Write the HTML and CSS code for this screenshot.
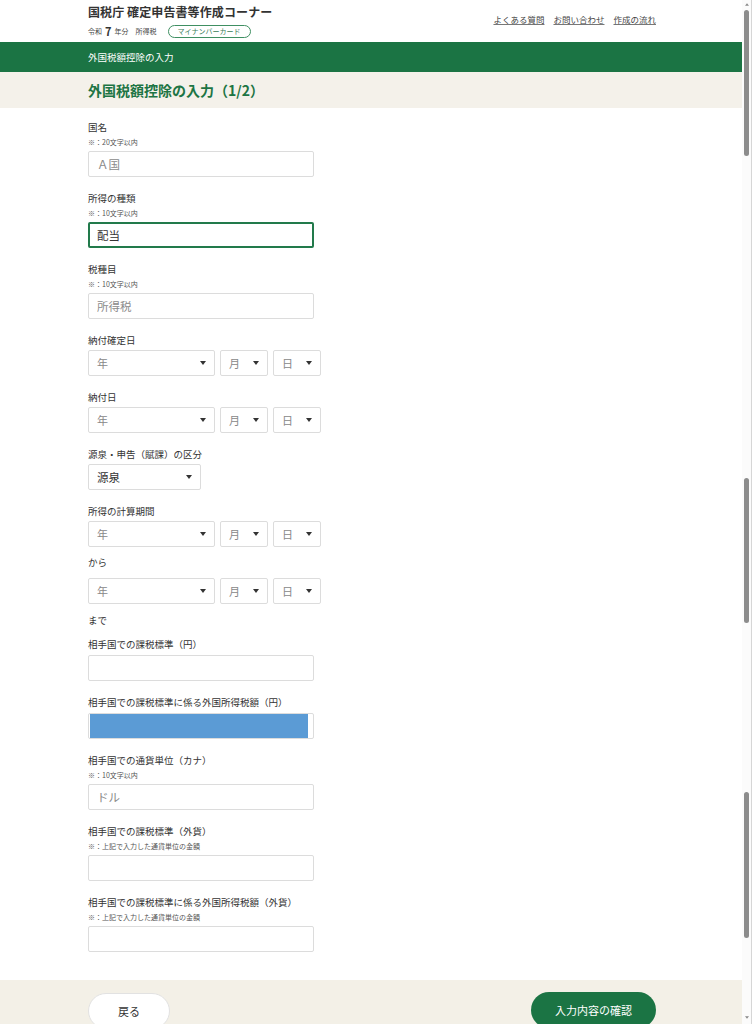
FILE: index.html
```html
<!DOCTYPE html>
<html lang="ja">
<head>
<meta charset="utf-8">
<title>外国税額控除の入力</title>
<link rel="stylesheet" href="styles.css">
</head>
<body>
<div class="app">
  <div class="main">
    <header class="top">
      <div class="brand">
        <div class="title">国税庁 確定申告書等作成コーナー</div>
        <div class="sub">
          <span class="era">令和</span><b class="year">7</b><span class="era">年分</span>
          <span class="era tax">所得税</span>
          <span class="pill">マイナンバーカード</span>
        </div>
      </div>
      <nav class="links">
        <a href="#">よくある質問</a>
        <a href="#">お問い合わせ</a>
        <a href="#">作成の流れ</a>
      </nav>
    </header>

    <div class="crumb">外国税額控除の入力</div>
    <div class="heading"><h1>外国税額控除の入力（1/2）</h1></div>

    <form class="form">
      <div class="field">
        <div class="label">国名</div>
        <div class="note">※：20文字以内</div>
        <input class="text" type="text" placeholder="Ａ国">
      </div>

      <div class="field">
        <div class="label">所得の種類</div>
        <div class="note">※：10文字以内</div>
        <input class="text focus" type="text" value="配当">
      </div>

      <div class="field">
        <div class="label">税種目</div>
        <div class="note">※：10文字以内</div>
        <input class="text" type="text" placeholder="所得税">
      </div>

      <div class="field">
        <div class="label">納付確定日</div>
        <div class="date">
          <div class="select y"><span>年</span><svg viewBox="0 0 6 4" class="arr"><path d="M0 0H6L3 4Z"/></svg></div>
          <div class="select m"><span>月</span><svg viewBox="0 0 6 4" class="arr"><path d="M0 0H6L3 4Z"/></svg></div>
          <div class="select m"><span>日</span><svg viewBox="0 0 6 4" class="arr"><path d="M0 0H6L3 4Z"/></svg></div>
        </div>
      </div>

      <div class="field">
        <div class="label">納付日</div>
        <div class="date">
          <div class="select y"><span>年</span><svg viewBox="0 0 6 4" class="arr"><path d="M0 0H6L3 4Z"/></svg></div>
          <div class="select m"><span>月</span><svg viewBox="0 0 6 4" class="arr"><path d="M0 0H6L3 4Z"/></svg></div>
          <div class="select m"><span>日</span><svg viewBox="0 0 6 4" class="arr"><path d="M0 0H6L3 4Z"/></svg></div>
        </div>
      </div>

      <div class="field">
        <div class="label">源泉・申告（賦課）の区分</div>
        <div class="date">
          <div class="select kind"><span class="val">源泉</span><svg viewBox="0 0 6 4" class="arr"><path d="M0 0H6L3 4Z"/></svg></div>
        </div>
      </div>

      <div class="field period">
        <div class="label">所得の計算期間</div>
        <div class="date">
          <div class="select y"><span>年</span><svg viewBox="0 0 6 4" class="arr"><path d="M0 0H6L3 4Z"/></svg></div>
          <div class="select m"><span>月</span><svg viewBox="0 0 6 4" class="arr"><path d="M0 0H6L3 4Z"/></svg></div>
          <div class="select m"><span>日</span><svg viewBox="0 0 6 4" class="arr"><path d="M0 0H6L3 4Z"/></svg></div>
        </div>
        <div class="between">から</div>
        <div class="date second">
          <div class="select y"><span>年</span><svg viewBox="0 0 6 4" class="arr"><path d="M0 0H6L3 4Z"/></svg></div>
          <div class="select m"><span>月</span><svg viewBox="0 0 6 4" class="arr"><path d="M0 0H6L3 4Z"/></svg></div>
          <div class="select m"><span>日</span><svg viewBox="0 0 6 4" class="arr"><path d="M0 0H6L3 4Z"/></svg></div>
        </div>
        <div class="between until">まで</div>
      </div>

      <div class="field">
        <div class="label">相手国での課税標準（円）</div>
        <input class="text" type="text">
      </div>

      <div class="field">
        <div class="label">相手国での課税標準に係る外国所得税額（円）</div>
        <div class="text hl"><div class="hl-fill"></div></div>
      </div>

      <div class="field">
        <div class="label">相手国での通貨単位（カナ）</div>
        <div class="note">※：10文字以内</div>
        <input class="text" type="text" placeholder="ドル">
      </div>

      <div class="field">
        <div class="label">相手国での課税標準（外貨）</div>
        <div class="note">※：上記で入力した通貨単位の金額</div>
        <input class="text" type="text">
      </div>

      <div class="field">
        <div class="label">相手国での課税標準に係る外国所得税額（外貨）</div>
        <div class="note">※：上記で入力した通貨単位の金額</div>
        <input class="text" type="text">
      </div>
    </form>

    <div class="footer">
      <button class="btn back" type="button">戻る</button>
      <button class="btn next" type="button">入力内容の確認</button>
    </div>
  </div>

  <div class="scrollbar">
    <svg class="sb-arrow" viewBox="0 0 6 4"><path d="M3 0L6 4H0Z"/></svg>
    <div class="thumb t1"></div>
    <div class="thumb t2"></div>
    <div class="thumb t3"></div>
    <div class="sb-space"></div>
    <svg class="sb-arrow" viewBox="0 0 6 4"><path d="M0 0H6L3 4Z"/></svg>
  </div>
</div>
</body>
</html>
```

FILE: styles.css
```css
* { box-sizing: border-box; }

html, body {
  margin: 0;
  padding: 0;
  height: 1024px;
  overflow: hidden;
  background: #ffffff;
  font-family: "Noto Sans CJK JP", "Noto Sans", "Liberation Sans", sans-serif;
  color: #333333;
}

.app {
  display: flex;
  width: 752px;
  height: 1024px;
}

.main {
  width: 742px;
  height: 1024px;
  display: flex;
  flex-direction: column;
  overflow: hidden;
}

/* header */
.top {
  flex: none;
  height: 42px;
  display: flex;
  justify-content: space-between;
  padding: 0 86px 0 88px;
}

.brand {
  display: flex;
  flex-direction: column;
}

.title {
  font-size: 12px;
  font-weight: 700;
  line-height: 16px;
  margin-top: 4px;
  color: #333;
  letter-spacing: 0.1px;
}

.sub {
  display: flex;
  align-items: center;
  height: 16px;
  margin-top: 3px;
}

.era {
  font-size: 7px;
  color: #444;
}

.year {
  font-size: 11px;
  font-weight: 700;
  margin: 0 3px;
  color: #333;
}

.tax {
  margin-left: 7px;
}

.pill {
  margin-left: 11px;
  height: 13px;
  width: 83px;
  border: 1px solid #3f8f62;
  border-radius: 7px;
  font-size: 7px;
  line-height: 11px;
  color: #3a7c57;
  text-align: center;
}

.links {
  display: flex;
  gap: 9px;
  padding-top: 13px;
}

.links a {
  font-size: 8.5px;
  line-height: 12px;
  color: #444;
  text-decoration: underline;
  text-decoration-color: #777;
}

/* crumb and heading */
.crumb {
  flex: none;
  height: 30px;
  background: #1b7444;
  color: #ffffff;
  font-size: 9.5px;
  line-height: 30px;
  padding-left: 88px;
}

.heading {
  flex: none;
  height: 36px;
  background: #f4f1ea;
  padding-left: 88px;
  display: flex;
  align-items: center;
}

.heading h1 {
  margin: 0;
  font-size: 14px;
  font-weight: 700;
  color: #1d7544;
  line-height: 18px;
}

/* form */
.form {
  flex: none;
  padding: 12px 0 29px 88px;
  height: 872px;
  display: flex;
  flex-direction: column;
  gap: 14px;
}

.field {
  flex: none;
  display: flex;
  flex-direction: column;
}

.label {
  font-size: 9.5px;
  line-height: 14px;
  color: #333;
}

.note {
  font-size: 7px;
  line-height: 12px;
  margin-top: 2px;
  color: #555;
}

.note + .text {
  margin-top: 3px;
}

.label + .text {
  margin-top: 4px;
}

.text {
  width: 226px;
  height: 26px;
  border: 1px solid #dcdcdc;
  border-radius: 2px;
  background: #fff;
  padding: 0 8px;
  font-family: inherit;
  font-size: 11.5px;
  color: #333;
  outline: none;
  display: block;
}

.text::placeholder {
  color: #8a8a8a;
}

.text.focus {
  border: 2px solid #227a4b;
  padding: 0 7px;
}

.text.hl {
  padding: 0;
}

.hl-fill {
  margin: 0 5px 0 1px;
  height: 24px;
  background: #5b9bd5;
}

.date {
  display: flex;
  gap: 5px;
  margin-top: 3px;
}

.select {
  height: 26px;
  border: 1px solid #dcdcdc;
  border-radius: 2px;
  background: #fff;
  display: flex;
  align-items: center;
  justify-content: space-between;
  padding: 0 8px 0 8px;
  font-size: 11px;
  color: #888;
}

.select.y { width: 127px; }
.select.m { width: 48px; }
.select.kind { width: 113px; }

.select .val {
  color: #333;
  font-size: 11.5px;
}

.arr {
  width: 6px;
  height: 4px;
  fill: #333;
}

.between {
  font-size: 9.5px;
  line-height: 14px;
  margin-top: 8px;
  color: #333;
}

.date.second {
  margin-top: 9px;
}

.between.until {
  margin-top: 9px;
  margin-bottom: -4px;
}

/* footer */
.footer {
  flex: none;
  height: 44px;
  background: #f3f0e7;
  display: flex;
  justify-content: space-between;
  align-items: flex-start;
  padding: 12px 86px 0 88px;
  overflow: hidden;
}

.btn {
  flex: none;
  font-family: inherit;
  font-size: 11px;
  height: 36px;
  border-radius: 18px;
  cursor: pointer;
}

.btn.back {
  width: 82px;
  margin-top: 1px;
  background: #fff;
  border: 1px solid #e2e2e2;
  color: #333;
}

.btn.next {
  width: 125px;
  background: #1b7444;
  border: none;
  color: #fff;
}

/* scrollbar */
.scrollbar {
  width: 10px;
  height: 1024px;
  background: #fbfbfb;
  display: flex;
  flex-direction: column;
  align-items: center;
  padding-top: 3px;
  border-right: 1px solid #d6d6d6;
}

.sb-arrow {
  width: 4px;
  height: 3px;
  fill: #8a8a8a;
  flex: none;
}

.thumb {
  width: 5px;
  background: #8c8c8c;
  border-radius: 3px;
  flex: none;
}

.t1 { margin-top: 4px; height: 146px; }
.t2 { margin-top: 322px; height: 145px; }
.t3 { margin-top: 169px; height: 146px; }

.sb-space { flex: 1; }
.scrollbar .sb-arrow:last-child { margin-bottom: 5px; }
```
